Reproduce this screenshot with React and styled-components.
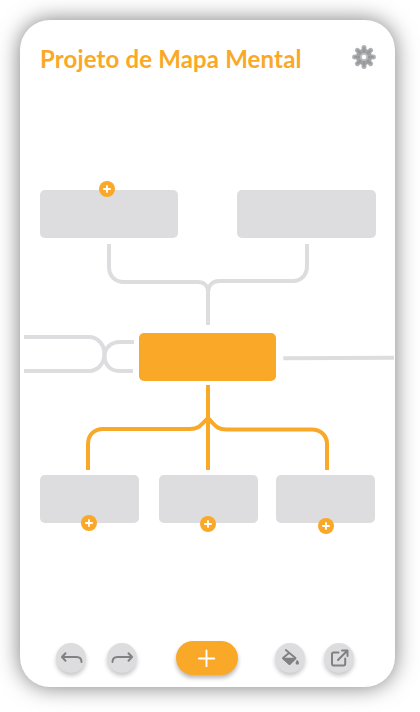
import React from 'react';
import styled, { createGlobalStyle } from 'styled-components';

const ORANGE = '#faa827';
const GREY = '#dddddf';

const GlobalStyle = createGlobalStyle`
  * { box-sizing: border-box; }
  body { margin: 0; background: #fff; overflow: hidden; }
`;

const Page = styled.div`
  width: 420px;
  height: 712px;
  padding: 20px 25px 25px 20px;
  background: #fff;
`;

const Card = styled.main`
  display: flex;
  flex-direction: column;
  width: 375px;
  height: 667px;
  border-radius: 30px;
  background: #fff;
  box-shadow: 0 0 22px rgba(0, 0, 0, 0.52);
`;

const Header = styled.header`
  display: flex;
  align-items: flex-start;
  justify-content: space-between;
  height: 80px;
  padding: 24px 19px 0 20px;
`;

const Title = styled.h1`
  margin: 0;
  color: ${ORANGE};
  font: 700 24px/30px Lato, "Open Sans", sans-serif;
  letter-spacing: 0.15px;
  white-space: nowrap;
`;

const SettingsButton = styled.button`
  display: flex;
  width: 24px;
  height: 24px;
  margin-top: 1px;
  padding: 0;
  border: 0;
  background: none;
`;

const Canvas = styled.section`
  position: relative;
  flex: 1;
`;

const Connectors = styled.svg`
  display: block;
  width: 375px;
  height: 520px;
  fill: none;
  stroke-width: 4;
`;

const Node = styled.div`
  position: absolute;
  left: ${(p) => p.$x}px;
  top: ${(p) => p.$y}px;
  width: ${(p) => p.$w}px;
  height: 48px;
  border-radius: 5px;
  background: ${(p) => (p.$main ? ORANGE : GREY)};
`;

const AddBadge = styled.button`
  position: absolute;
  left: ${(p) => p.$x}px;
  top: ${(p) => p.$y}px;
  display: flex;
  align-items: center;
  justify-content: center;
  width: 16px;
  height: 16px;
  padding: 0;
  border: 0;
  border-radius: 50%;
  background: ${ORANGE};
`;

const Toolbar = styled.footer`
  display: flex;
  align-items: center;
  justify-content: space-between;
  height: 34px;
  margin: 0 41px 12px 36px;
`;

const Group = styled.div`
  display: flex;
  gap: ${(p) => p.$gap}px;
`;

const RoundButton = styled.button`
  display: flex;
  align-items: center;
  justify-content: center;
  width: 30px;
  height: 30px;
  padding: 0;
  border: 0;
  border-radius: 50%;
  background: ${GREY};
  box-shadow: 0 3px 4px rgba(0, 0, 0, 0.22);
`;

const AddButton = styled.button`
  display: flex;
  align-items: center;
  justify-content: center;
  width: 62px;
  height: 34px;
  margin-right: -1px;
  padding: 0;
  border: 0;
  border-radius: 17px;
  background: ${ORANGE};
  box-shadow: 0 3px 4px rgba(0, 0, 0, 0.28);
`;

const ToolIcon = styled.svg`
  display: block;
  width: 30px;
  height: 30px;
  fill: none;
  stroke: #818181;
  stroke-width: 2;
  stroke-linecap: round;
  stroke-linejoin: round;
`;

const nodes = [
  { x: 20, y: 90, w: 138, badge: [59, -9] },
  { x: 217, y: 90, w: 139 },
  { x: 119, y: 233, w: 137, main: true },
  { x: 20, y: 375, w: 99, badge: [41, 40] },
  { x: 139, y: 375, w: 99, badge: [41, 41] },
  { x: 256, y: 375, w: 99, badge: [42, 43] },
];

const Gear = () => (
  <svg width="24" height="24" viewBox="0 0 24 24">
    <g stroke="#b0b2b5" strokeWidth="5" strokeLinecap="round">
      {[0, 45, 90, 135].map((a) => (
        <path key={a} d="M12 2.6V21.4" transform={`rotate(${a} 12 12)`} />
      ))}
    </g>
    <circle cx="12" cy="12" r="8" fill="#a1a4a7" />
    <g stroke="#97999c" strokeWidth="2.2" strokeLinecap="round">
      {[0, 45, 90, 135].map((a) => (
        <path key={a} d="M12 3V21" transform={`rotate(${a} 12 12)`} />
      ))}
    </g>
    <circle cx="12" cy="12" r="3.1" fill="#fff" stroke="#bbbdbf" strokeWidth="1.8" />
  </svg>
);

const SmallPlus = () => (
  <svg width="8" height="8" viewBox="0 0 8 8">
    <path d="M4 .9V7.1M.9 4H7.1" stroke="#fff" strokeWidth="1.8" strokeLinecap="round" />
  </svg>
);

export default function App() {
  return (
    <>
      <GlobalStyle />
      <Page>
        <Card>
          <Header>
            <Title>Projeto de Mapa Mental</Title>
            <SettingsButton aria-label="Configurações"><Gear /></SettingsButton>
          </Header>
          <Canvas>
            <Connectors viewBox="20 100 375 520">
              <g stroke={GREY}>
                <path d="M109 244V267C109 276 115 282 124 282H198C204 282 208 286 208 292V325" />
                <path d="M307 244V266C307 275 301 281 293 281H219C212 281 208 286 208 292" />
                <path d="M24 337H89C98 337 104.5 345 104.5 354C104.5 363 98 371 89 371H24" />
                <path d="M134 342H120C111 342 104.5 348 104.5 356C104.5 364 110 371 119 371H133" />
                <path d="M283.3 358.3L394 357.7" />
              </g>
              <g stroke={ORANGE}>
                <path d="M208 385V470" />
                <path d="M88 470V444C88 435 94 429 103 429H190C199 429 201 425 208 418C215 425 217 429.5 226 429.5H312C321 429.5 327 436 327 444V470" />
              </g>
            </Connectors>
            {nodes.map((n) => (
              <Node key={`${n.x}-${n.y}`} $x={n.x} $y={n.y} $w={n.w} $main={n.main}>
                {n.badge && (
                  <AddBadge aria-label="Adicionar" $x={n.badge[0]} $y={n.badge[1]}>
                    <SmallPlus />
                  </AddBadge>
                )}
              </Node>
            ))}
          </Canvas>
          <Toolbar>
            <Group $gap={21}>
              <RoundButton aria-label="Desfazer">
                <ToolIcon viewBox="0 0 30 30">
                  <path d="M9.5 10.2L6 14L9.5 17.7M6.5 14H20.5C24 14 25.5 15.5 25.5 19" />
                </ToolIcon>
              </RoundButton>
              <RoundButton aria-label="Refazer">
                <ToolIcon viewBox="0 0 30 30">
                  <path d="M21.5 10.2L25 14L21.5 17.7M24.5 14H10.5C7 14 5.5 15.5 5.5 19" />
                </ToolIcon>
              </RoundButton>
            </Group>
            <AddButton aria-label="Novo item">
              <svg width="18" height="18" viewBox="0 0 18 18">
                <path d="M8.5 1.5V17.2M.8 9.5H16.3" stroke="#fff" strokeWidth="1.9" strokeLinecap="round" />
              </svg>
            </AddButton>
            <Group $gap={19}>
              <RoundButton aria-label="Preencher">
                <ToolIcon viewBox="0 0 30 30">
                  <path d="M10.8 7L20.5 15L14.5 21L8 15L14.3 9.8" strokeWidth="1.8" />
                  <path d="M8 15.4H20.5L14.5 21.3Z" fill="#818181" strokeWidth="1.5" />
                  <path d="M22.2 16.8C21.2 18.2 20.6 19 20.6 20A1.7 1.7 0 0 0 24 20C24 19 23.2 18.2 22.2 16.8Z" fill="#818181" stroke="none" />
                </ToolIcon>
              </RoundButton>
              <RoundButton aria-label="Exportar">
                <ToolIcon viewBox="0 0 30 30">
                  <path d="M14.5 9.5H9.5Q8 9.5 8 11V20.5Q8 22.5 9.5 22.5H19.5Q21.2 22.5 21.2 20.5V15.5M18 7.5H23.5V13M23 8L14 17" />
                </ToolIcon>
              </RoundButton>
            </Group>
          </Toolbar>
        </Card>
      </Page>
    </>
  );
}
